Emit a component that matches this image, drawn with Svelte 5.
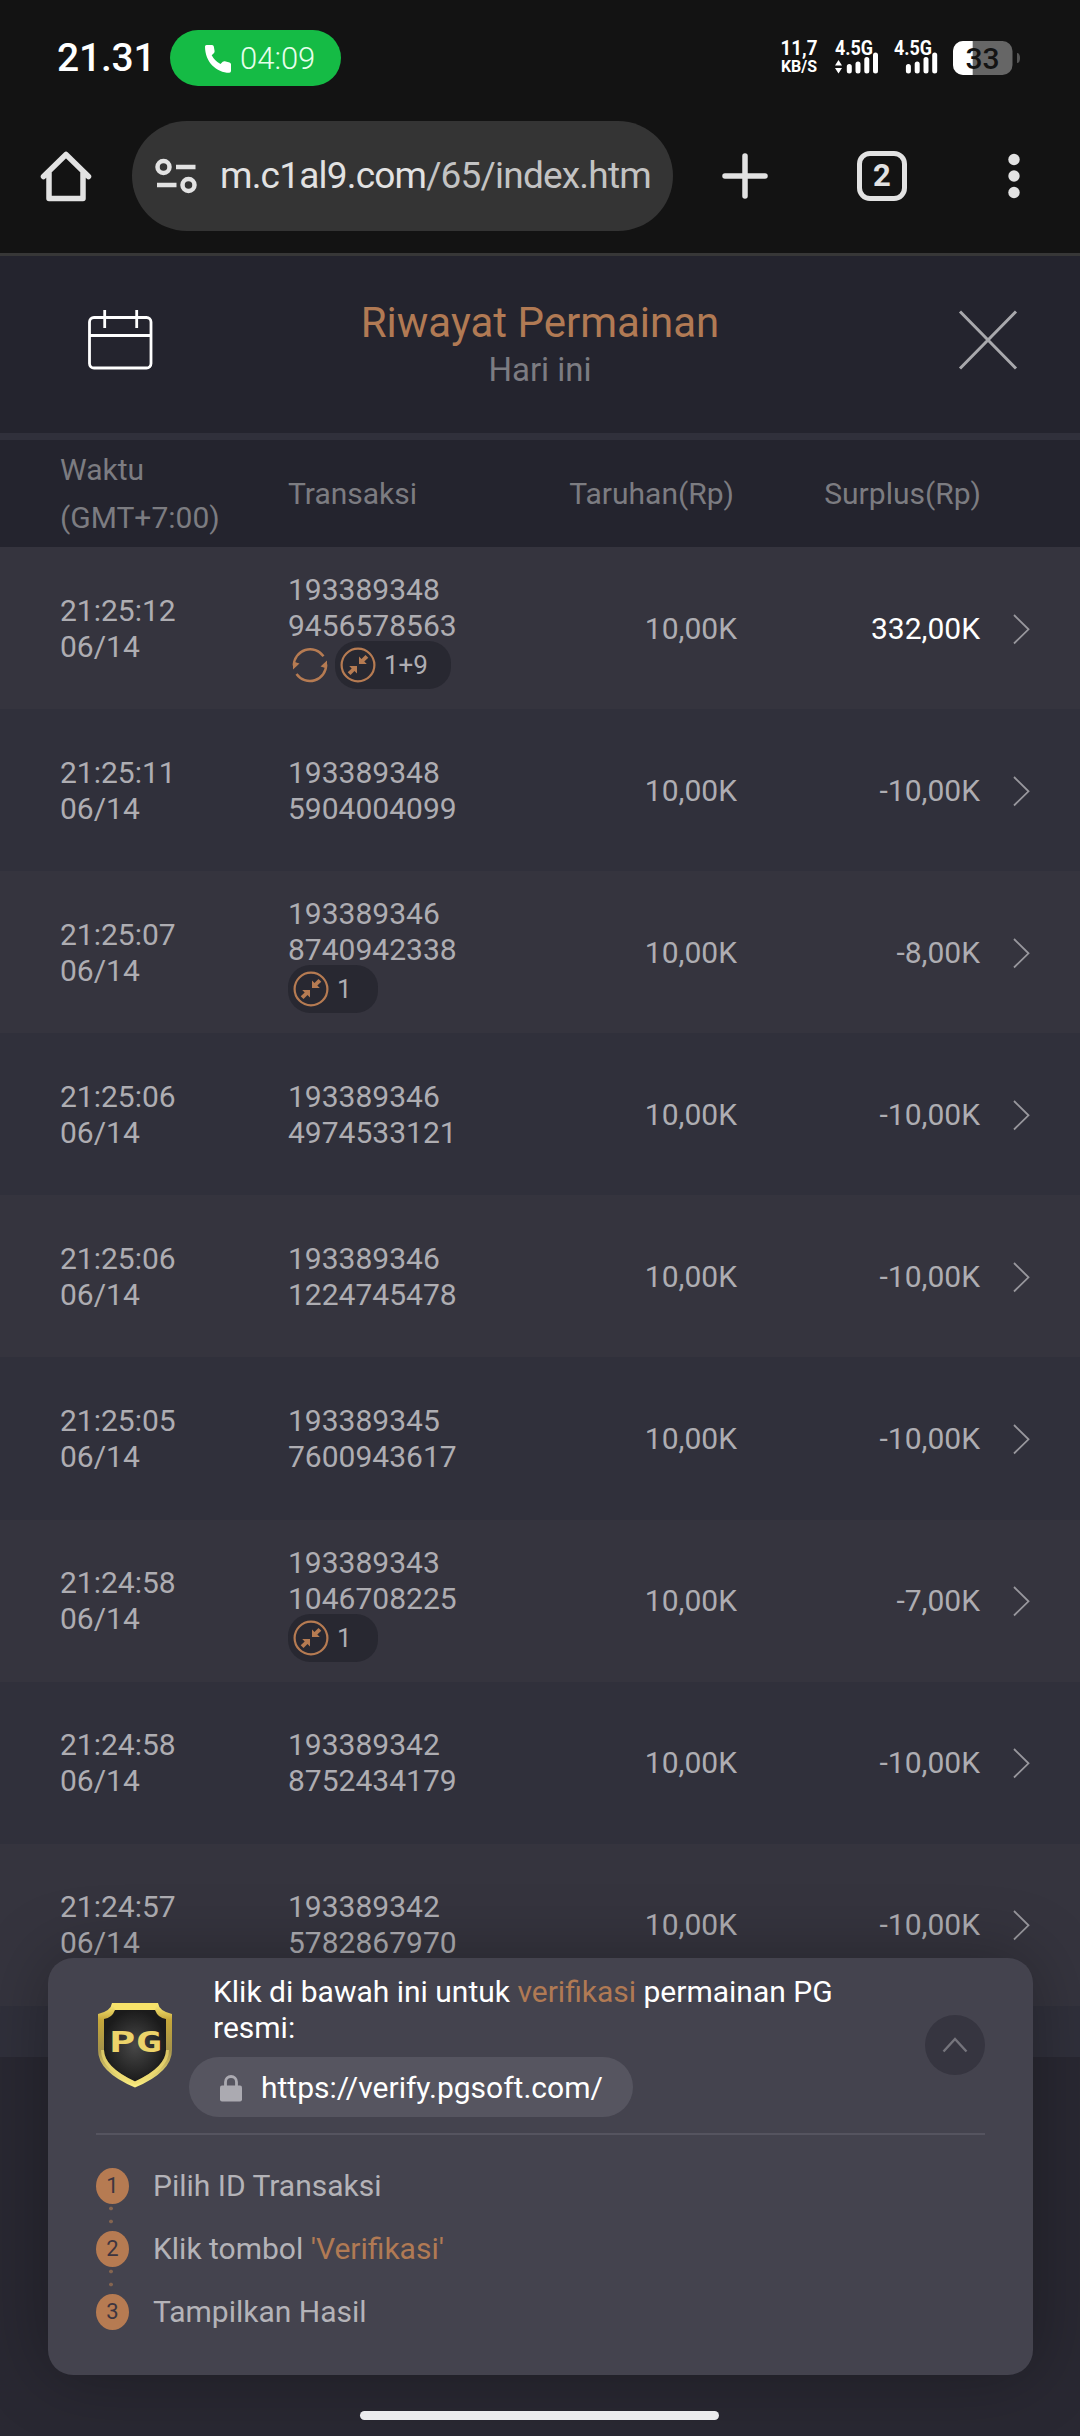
<script lang="ts">
    type Bet = {
        time: string
        date: string
        id: [string, string]
        bet: string
        surplus: string
        win?: boolean
        respin?: boolean
        badge?: string
    }

    const bets: Bet[] = [
        { time: "21:25:12", date: "06/14", id: ["193389348", "9456578563"], bet: "10,00K", surplus: "332,00K", win: true, respin: true, badge: "1+9" },
        { time: "21:25:11", date: "06/14", id: ["193389348", "5904004099"], bet: "10,00K", surplus: "-10,00K" },
        { time: "21:25:07", date: "06/14", id: ["193389346", "8740942338"], bet: "10,00K", surplus: "-8,00K", badge: "1" },
        { time: "21:25:06", date: "06/14", id: ["193389346", "4974533121"], bet: "10,00K", surplus: "-10,00K" },
        { time: "21:25:06", date: "06/14", id: ["193389346", "1224745478"], bet: "10,00K", surplus: "-10,00K" },
        { time: "21:25:05", date: "06/14", id: ["193389345", "7600943617"], bet: "10,00K", surplus: "-10,00K" },
        { time: "21:24:58", date: "06/14", id: ["193389343", "1046708225"], bet: "10,00K", surplus: "-7,00K", badge: "1" },
        { time: "21:24:58", date: "06/14", id: ["193389342", "8752434179"], bet: "10,00K", surplus: "-10,00K" },
        { time: "21:24:57", date: "06/14", id: ["193389342", "5782867970"], bet: "10,00K", surplus: "-10,00K" },
    ]

    let expanded = $state(true)
</script>

<div class="screen">
    <div class="status-bar">
        <span class="clock">21.31</span>
        <div class="call">
            <svg width="28" height="30" viewBox="0 0 28 30">
                <path d="M1 2.5Q1 1 2.5 1H8q1.600 0 1.800 1.600L10.600 7q.2 1.300-.8 2.200L7.700 11.200q3.200 6 8.800 8.800l2.200-2.200q1-.9 2.200-.6l4.600 1.200q1.500.4 1.500 1.900V27q0 1.800-1.700 1.800C12.500 28.800 1 18 1 2.500z" fill="#fff" />
            </svg>
            <span>04:09</span>
        </div>
        <svg class="signals" width="242" height="42" viewBox="780 37 242 42">
            <g class="small" fill="#fff">
                <text x="780.500" y="55" font-size="20" textLength="37" lengthAdjust="spacingAndGlyphs">11,7</text>
                <text x="781" y="72" font-size="16" textLength="36" lengthAdjust="spacingAndGlyphs">KB/S</text>
                <text x="835" y="55" font-size="20" textLength="38" lengthAdjust="spacingAndGlyphs">4.5G</text>
                <text x="894" y="55" font-size="20" textLength="38" lengthAdjust="spacingAndGlyphs">4.5G</text>
            </g>
            <path d="M838.500 60l3.500 5.500h-7zM838.500 73.500l3.500-5.500h-7z" fill="#fff" />
            <g stroke="#fff" stroke-width="5" stroke-linecap="round">
                <path d="M849.300 66.500v4.500M858 64v7M866.800 59.500V71M875.500 55v16" />
                <path d="M908.400 66.500v4.500M917.200 64v7M926 59.500V71M934.700 55v16" />
            </g>
            <rect x="953" y="41" width="59.500" height="34" rx="10" fill="#666" />
            <path d="M972.700 41H963a10 10 0 0 0-10 10v14a10 10 0 0 0 10 10h9.700z" fill="#fff" />
            <path d="M1017 53c2 0 3 2 3 5s-1 5-3 5z" fill="#555" />
            <text class="percent" x="965.500" y="69" font-size="30" fill="#131313">33</text>
        </svg>
    </div>

    <div class="toolbar">
        <svg class="home" width="52" height="52" viewBox="0 0 52 52" fill="none" stroke="#e2e2e2" stroke-width="5.500" stroke-linecap="round" stroke-linejoin="round">
            <path d="M3.500 26.500L26 4.500l22.500 22M9 23v25.500h34V23" />
        </svg>
        <div class="address">
            <svg width="42" height="36" viewBox="0 0 42 36" fill="none" stroke="#e2e2e2" stroke-width="4.500">
                <circle cx="8.500" cy="9" r="6" />
                <path d="M21 9h19.500M2 27h19.500" />
                <circle cx="33.500" cy="27" r="6" />
            </svg>
            <div class="url"><b>m.c1al9.com</b>/65/index.htm</div>
        </div>
        <svg class="plus" width="46" height="46" viewBox="0 0 46 46" stroke="#e2e2e2" stroke-width="5.500" stroke-linecap="round">
            <path d="M23 3v40M3 23h40" />
        </svg>
        <div class="tabs">2</div>
        <svg class="menu" width="12" height="46" viewBox="0 0 12 46" fill="#e2e2e2">
            <circle cx="6" cy="6.500" r="5.700" />
            <circle cx="6" cy="23" r="5.700" />
            <circle cx="6" cy="39.500" r="5.700" />
        </svg>
    </div>

    <header>
        <svg width="66" height="62" viewBox="0 0 66 62" fill="none" stroke="#fff" stroke-width="2.800">
            <rect x="2.500" y="8.500" width="61.500" height="50.500" rx="4.500" />
            <path d="M2.500 26.500H64M17.700 1v18M49.700 1v18" />
        </svg>
        <div class="titles">
            <h1>Riwayat Permainan</h1>
            <p>Hari ini</p>
        </div>
        <svg class="close" width="60" height="60" viewBox="0 0 60 60" fill="none" stroke="#a8a8ac" stroke-width="3">
            <path d="M2 1.500l56 57M58 1.500l-56 57" />
        </svg>
    </header>

    <div class="columns head">
        <div class="tall">Waktu<br>(GMT+7:00)</div>
        <div>Transaksi</div>
        <div class="num bet">Taruhan(Rp)</div>
        <div class="num">Surplus(Rp)</div>
    </div>

    <div class="list">
        {#each bets as bet}
            <div class="columns row">
                <div>{bet.time}<br>{bet.date}</div>
                <div>
                    {bet.id[0]}<br>{bet.id[1]}
                    {#if bet.badge}
                        <div class="marks">
                            {#if bet.respin}
                                <svg class="respin" width="36" height="36" viewBox="0 0 36 36" fill="none" stroke="#b67b52" stroke-width="2.400">
                                    <path d="M1.800 18.500A16.300 16.300 0 0 1 31.500 9.300M34.200 17.500A16.300 16.300 0 0 1 4.500 27" />
                                    <path d="M1 22.500V14.500l6.500 2zM35 13.500V21.500l-6.500-2z" fill="#b67b52" stroke="none" />
                                </svg>
                            {/if}
                            <div class="badge">
                                <svg width="36" height="36" viewBox="0 0 36 36" fill="#b67b52">
                                    <circle cx="18" cy="18" r="16.400" fill="none" stroke="#b67b52" stroke-width="2.200" />
                                    <path d="M19 17V9.500l2.500 2.500L25.500 8l2.800 2.800L24.300 14.500l2.500 2.500zM17 19v7.500l-2.500-2.500L10.500 28l-2.800-2.800L11.700 21.500l-2.500-2.500z" />
                                </svg>
                                {bet.badge}
                            </div>
                        </div>
                    {/if}
                </div>
                <div class="num">{bet.bet}</div>
                <div class="num" class:win={bet.win}>{bet.surplus}</div>
                <svg width="20" height="32" viewBox="0 0 20 32" fill="none" stroke="#98979d" stroke-width="1.800">
                    <path d="M2 2l14.500 14.300L2 30.500" />
                </svg>
            </div>
        {/each}
    </div>

    <div class="verify">
        <div class="verify-top">
            <svg class="shield" width="76" height="86" viewBox="0 0 76 86">
                <defs>
                    <linearGradient id="gold" x1="0" y1="0" x2="0" y2="1">
                        <stop offset="0" stop-color="#fff07e" />
                        <stop offset=".2" stop-color="#c6a73a" />
                        <stop offset=".55" stop-color="#a5924a" />
                        <stop offset="1" stop-color="#fff284" />
                    </linearGradient>
                    <radialGradient id="dark">
                        <stop offset="0" stop-color="#484848" />
                        <stop offset="1" stop-color="#1b1b1b" />
                    </radialGradient>
                </defs>
                <path d="M15 1h46q1 8 14 11v36q0 22-37 37.500Q1 70 1 48V12Q14 9 15 1z" fill="url(#gold)" />
                <path d="M18 8h40q3 8 11 9v31q0 17-31 31.500Q7 65 7 48V17q8-1 11-9z" fill="url(#dark)" />
                <path d="M15 1l3 7h40l3-7z" fill="#f8e36a" />
                <path d="M7 48q0 17 31 31.500Q69 65 69 48l3 0q0 20-34 35Q4 68 4 48z" fill="#f2de71" opacity=".65" />
                <text x="12" y="49.500" textLength="53" lengthAdjust="spacingAndGlyphs">PG</text>
            </svg>
            <div class="verify-body">
                <p>Klik di bawah ini untuk <em>verifikasi</em> permainan PG resmi:</p>
                <div class="link">
                    <svg width="24" height="28" viewBox="0 0 24 28">
                        <path d="M6.500 13V8a5.500 5.500 0 0 1 11 0v5" fill="none" stroke="#abaab1" stroke-width="2.800" />
                        <rect x="1" y="11.500" width="22" height="16" rx="2" fill="#abaab1" />
                    </svg>
                    https://verify.pgsoft.com/
                </div>
            </div>
            <button class="toggle" aria-label="Toggle" onclick={() => expanded = !expanded}>
                <svg width="26" height="18" viewBox="0 0 26 18" fill="none" stroke="#75747c" stroke-width="2.400">
                    <path d="M1.500 15.500L13 3l11.500 12.500" />
                </svg>
            </button>
        </div>
        {#if expanded}
            <ol>
                <li><span class="step">1</span>Pilih ID Transaksi</li>
                <li><span class="step">2</span><span>Klik tombol <em>'Verifikasi'</em></span></li>
                <li><span class="step">3</span>Tampilkan Hasil</li>
            </ol>
        {/if}
    </div>
    <div class="gesture"></div>
</div>

<style>
    :global(body) {
        margin: 0;
        background: #292832;
    }

    .screen {
        position: relative;
        width: 1080px;
        height: 2436px;
        overflow: hidden;
        background: #292832;
        color: #aeadb2;
        font: 30px/36px Roboto, sans-serif;
    }

    .status-bar {
        display: flex;
        align-items: center;
        box-sizing: border-box;
        height: 116px;
        padding: 0 58px 0 57px;
        background: #131313;
    }

    .clock {
        width: 113px;
        color: #fff;
        font-size: 39px;
        font-weight: 500;
        letter-spacing: -.2px;
    }

    .call {
        display: flex;
        align-items: center;
        gap: 8px;
        box-sizing: border-box;
        width: 171px;
        height: 56px;
        padding: 1px 0 0 34px;
        border-radius: 28px;
        background: #15bb45;
        color: #e6ffec;
        font-size: 31px;
        font-weight: 300;
    }

    .signals {
        margin-left: auto;
    }

    .small {
        font-weight: 700;
    }

    .percent {
        font-weight: 500;
    }

    .toolbar {
        display: flex;
        align-items: center;
        box-sizing: border-box;
        height: 140px;
        padding: 0 60px 17px 40px;
        border-bottom: 3px solid #373737;
        background: #131313;
    }

    .address {
        display: flex;
        align-items: center;
        gap: 23px;
        box-sizing: border-box;
        width: 541px;
        height: 110px;
        margin-left: 40px;
        padding: 0 22px 0 23px;
        border-radius: 55px;
        background: #343434;
    }

    .url {
        flex: 1;
        overflow: hidden;
        white-space: nowrap;
        color: #c3c3c3;
        font-size: 37px;
        line-height: 50px;
        letter-spacing: -.8px;
    }

    .url b {
        color: #e2e2e2;
        font-weight: 400;
    }

    .plus {
        margin-left: 49px;
    }

    .tabs {
        box-sizing: border-box;
        width: 50px;
        height: 50px;
        margin-left: 89px;
        border: 5.500px solid #e2e2e2;
        border-radius: 13px;
        color: #e2e2e2;
        font-size: 31px;
        font-weight: 700;
        line-height: 39px;
        text-align: center;
    }

    .menu {
        margin-left: 101px;
    }

    header {
        display: grid;
        grid-template-columns: 1fr auto 1fr;
        align-items: center;
        box-sizing: border-box;
        height: 184px;
        padding: 0 62px 10px 87px;
        border-bottom: 7px solid #30303b;
        background: #24242e;
    }

    .titles {
        margin: 11px 25px 0 0;
        text-align: center;
    }

    .close {
        justify-self: end;
    }

    h1, p {
        margin: 0;
        font-weight: 400;
    }

    h1 {
        color: #b17a54;
        font-size: 42px;
        line-height: 48px;
    }

    .titles p {
        color: #7c7c82;
        font-size: 33px;
        line-height: 45px;
    }

    .columns {
        display: grid;
        grid-template-columns: 228px 224px 225px 243px 52px;
        align-items: center;
        padding-left: 60px;
    }

    .columns > svg {
        justify-self: end;
    }

    .head {
        grid-template-columns: 228px 225px 225px 243px;
        height: 107px;
        background: #24242e;
        color: #7c7c81;
    }

    .tall {
        line-height: 48px;
    }

    .num {
        text-align: right;
    }

    .bet {
        padding-right: 4px;
    }

    .list {
        height: 1510px;
        background: #30303b;
    }

    .row {
        box-sizing: border-box;
        height: 162.100px;
        padding-top: 1px;
    }

    .row:nth-child(odd) {
        background: #35343e;
    }

    .win {
        color: #fff;
    }

    .marks {
        display: flex;
        align-items: center;
        margin: -3px 0 -4px;
    }

    .respin {
        margin: 0 7px 0 4px;
    }

    .badge {
        display: flex;
        align-items: center;
        gap: 8px;
        box-sizing: border-box;
        min-width: 90px;
        height: 48px;
        padding: 0 23px 0 5px;
        border-radius: 22px;
        background: #282831;
        font-size: 26px;
    }

    .verify {
        position: absolute;
        left: 48px;
        top: 1958px;
        box-sizing: border-box;
        width: 985px;
        height: 417px;
        padding: 0 48px;
        border-radius: 25px;
        background: #44434e;
        box-shadow: 0 0 70px rgba(0, 0, 0, .3);
    }

    .verify-top {
        display: flex;
        box-sizing: border-box;
        height: 177px;
        border-bottom: 2px solid #55545f;
    }

    .shield {
        margin: 44px 14px 0 1px;
    }

    .shield text {
        fill: #ecd36a;
        font: 700 29px "DejaVu Sans Mono", monospace;
    }

    .verify-body {
        width: 690px;
        padding-top: 16px;
        color: #fff;
    }

    .verify-body p {
        width: 640px;
        margin-left: 26px;
    }

    .link {
        display: flex;
        align-items: center;
        gap: 18px;
        box-sizing: border-box;
        width: 444px;
        height: 60px;
        margin: 11px 0 0 2px;
        padding: 1px 0 0 30px;
        border-radius: 30px;
        background: #565560;
    }

    em {
        color: #b17a54;
        font-style: normal;
    }

    .toggle {
        display: grid;
        place-items: center;
        width: 60px;
        height: 60px;
        margin: 57px 0 0 auto;
        padding: 0;
        border: 0;
        border-radius: 50%;
        background: #363540;
    }

    ol {
        display: grid;
        gap: 27px;
        margin: 0;
        padding: 33px 0 0;
        list-style: none;
    }

    li {
        position: relative;
        display: flex;
        align-items: center;
        gap: 24px;
        height: 36px;
        color: #b4b3b8;
    }

    /* dotted connector down to the next step */
    li:not(:last-child)::after {
        content: "";
        position: absolute;
        left: 13px;
        top: 34px;
        width: 4px;
        height: 26px;
        background: radial-gradient(circle, #84644f 1.500px, transparent 2.200px) 0 0 / 4px 13px repeat-y;
    }

    .step {
        width: 33px;
        height: 36px;
        border-radius: 50%;
        background: #b67b52;
        color: #3d3540;
        font-size: 22px;
        text-align: center;
    }

    .gesture {
        position: absolute;
        left: 360px;
        top: 2411px;
        width: 359px;
        height: 9px;
        border-radius: 5px;
        background: #ececee;
    }
</style>
